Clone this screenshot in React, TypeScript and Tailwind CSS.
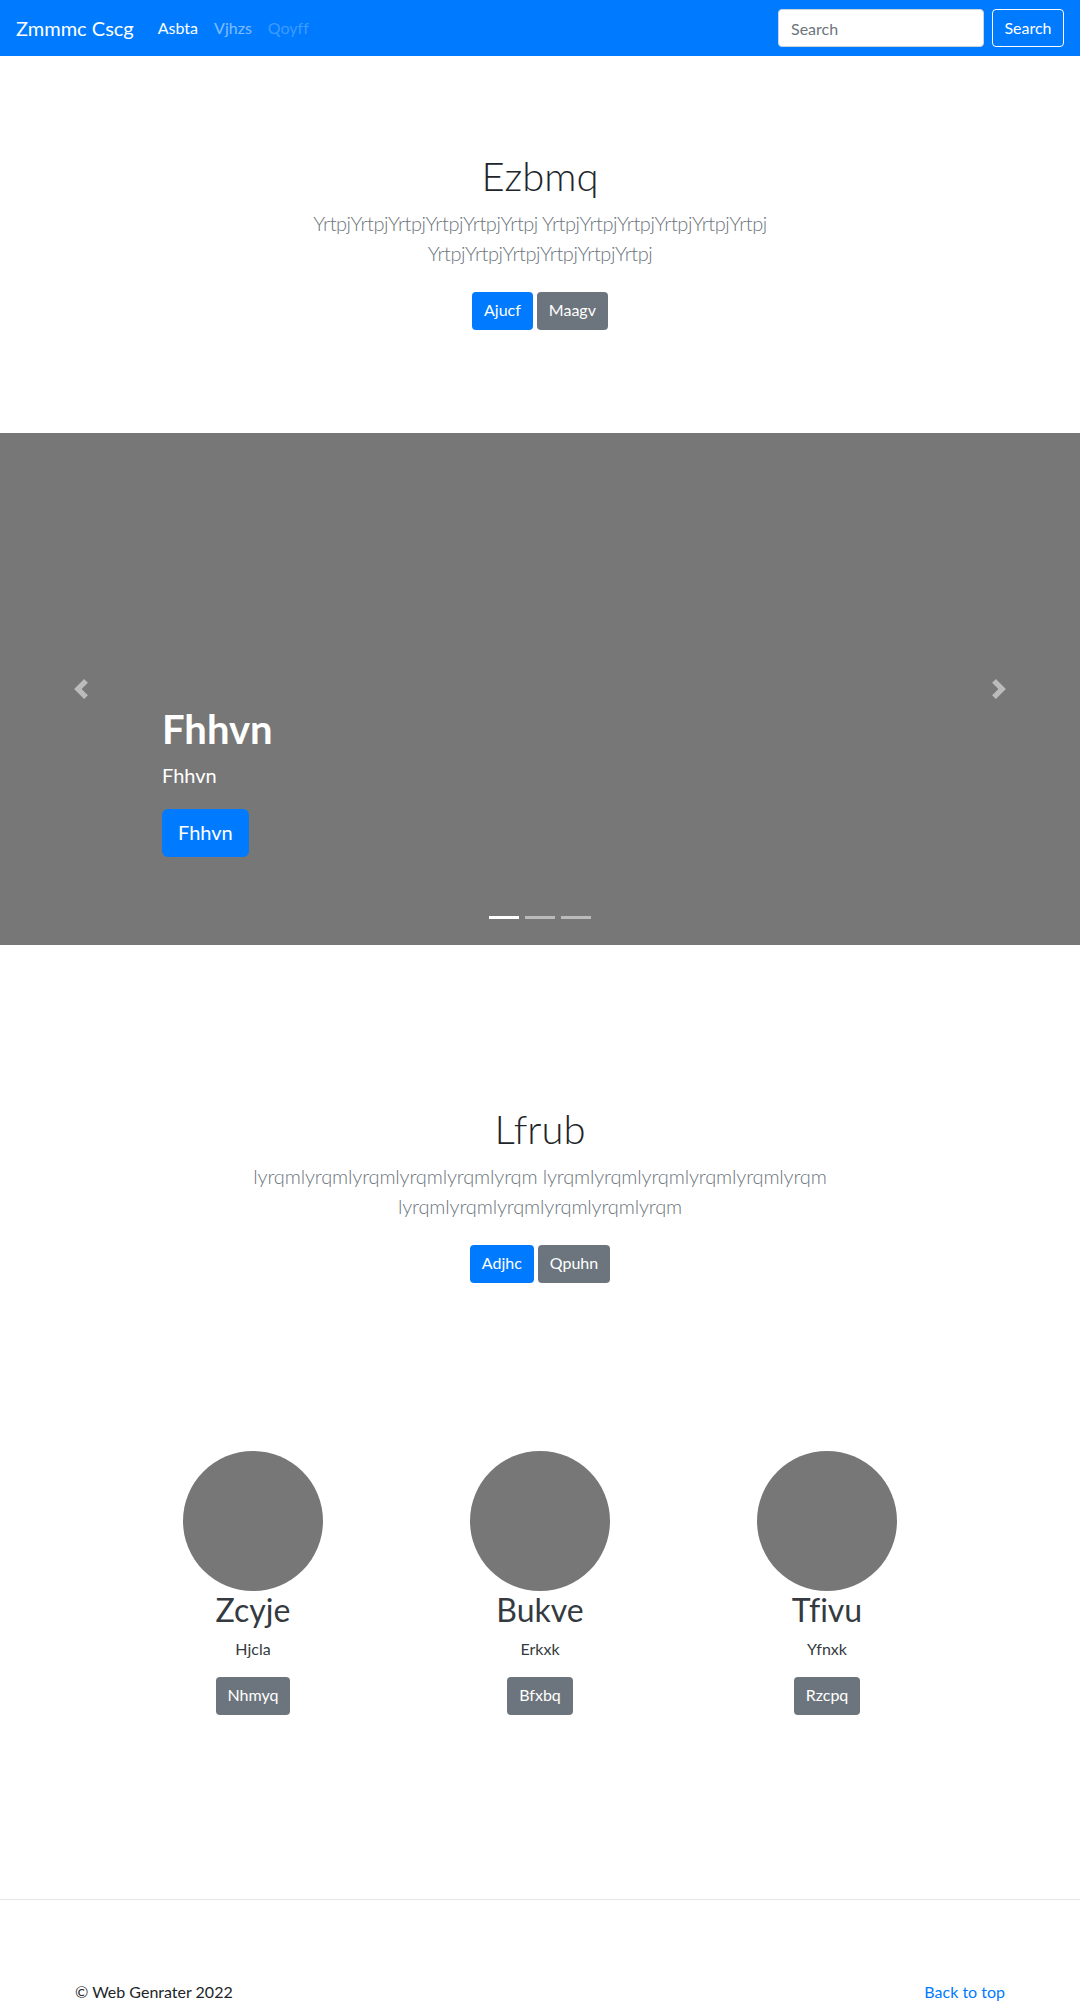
import React from "react";

const navLinks = [
  { label: "Asbta", className: "text-white" },
  { label: "Vjhzs", className: "text-white/50" },
  { label: "Qoyff", className: "text-white/25" },
];

const features = [
  { name: "Zcyje", sub: "Hjcla", btn: "Nhmyq" },
  { name: "Bukve", sub: "Erkxk", btn: "Bfxbq" },
  { name: "Tfivu", sub: "Yfnxk", btn: "Rzcpq" },
];

function Hero({
  title,
  lead,
  primary,
  secondary,
  pad,
  tracking,
}: {
  title: string;
  lead: string;
  primary: string;
  secondary: string;
  pad: string;
  tracking: string;
}) {
  return (
    <section className={`pt-24 text-center ${pad}`}>
      <div className="mx-auto w-[610px]">
        <h1 className="mb-2 text-[40px] font-light leading-[48px]">{title}</h1>
        <p className={`mb-6 text-xl font-light leading-[30px] text-[#6c757d] ${tracking}`}>{lead}</p>
        <div className="flex justify-center gap-1">
          <a className="h-[38px] rounded bg-[#007bff] px-3 py-1.5 text-base leading-6 text-white">{primary}</a>
          <a className="h-[38px] rounded bg-[#6c757d] px-3 py-1.5 text-base leading-6 text-white">{secondary}</a>
        </div>
      </div>
    </section>
  );
}

function Chevron({ dir }: { dir: "prev" | "next" }) {
  return (
    <svg width="20" height="20" viewBox="0 0 8 8" fill="#fff">
      {dir === "prev" ? (
        <path d="M5.25 0l-4 4 4 4 1.5-1.5L4.25 4l2.5-2.5L5.25 0z" />
      ) : (
        <path d="M2.75 0l-1.5 1.5L3.75 4l-2.5 2.5L2.75 8l4-4-4-4z" />
      )}
    </svg>
  );
}

export default function App() {
  return (
    <div className="bg-white font-['Segoe_UI','Lato',sans-serif] text-base leading-6 text-[#212529] [font-variant-ligatures:none]">
      {/* Navbar */}
      <nav className="flex h-14 items-center bg-[#007bff] px-4">
        <a className="mr-4 py-[5px] text-xl leading-[30px] text-white">Zmmmc Cscg</a>
        <ul className="flex">
          {navLinks.map((l) => (
            <li key={l.label}>
              <a className={`block px-2 py-2 ${l.className}`}>{l.label}</a>
            </li>
          ))}
        </ul>
        <form className="ml-auto flex items-center">
          <input
            className="mr-2 h-[38px] w-[206px] rounded border border-[#ced4da] bg-white px-3 py-1.5 text-base text-[#495057] outline-none placeholder:text-[#6c757d]"
            placeholder="Search"
          />
          <button type="button" className="h-[38px] w-[72px] rounded border border-white text-base text-white">
            Search
          </button>
        </form>
      </nav>

      <Hero
        title="Ezbmq"
        lead="YrtpjYrtpjYrtpjYrtpjYrtpjYrtpj YrtpjYrtpjYrtpjYrtpjYrtpjYrtpj YrtpjYrtpjYrtpjYrtpjYrtpjYrtpj"
        primary="Ajucf"
        secondary="Maagv"
        pad="pb-[103px]"
        tracking="tracking-[-0.45px]"
      />

      {/* Carousel */}
      <div className="relative mb-16 h-[512px] overflow-hidden bg-[#777]">
        <div className="absolute top-0 bottom-0 left-0 flex w-[15%] items-center justify-center opacity-50">
          <Chevron dir="prev" />
        </div>
        <div className="absolute top-0 right-0 bottom-0 flex w-[15%] items-center justify-center opacity-50">
          <Chevron dir="next" />
        </div>
        <div className="absolute right-[15%] bottom-12 left-[15%] py-5 text-left text-white">
          <h1 className="mb-2 text-[40px] font-bold leading-[48px]">Fhhvn</h1>
          <p className="mb-5 text-xl leading-7">Fhhvn</p>
          <p className="mb-5">
            <a className="inline-block h-12 rounded-md bg-[#007bff] px-4 py-2 text-xl leading-[30px] text-white">Fhhvn</a>
          </p>
        </div>
        <ol className="absolute right-0 bottom-0 left-0 mb-4 flex justify-center">
          <li className="mx-[3px] my-[10px] h-[3px] w-[30px] bg-white" />
          <li className="mx-[3px] my-[10px] h-[3px] w-[30px] bg-white opacity-50" />
          <li className="mx-[3px] my-[10px] h-[3px] w-[30px] bg-white opacity-50" />
        </ol>
      </div>

      <Hero
        title="Lfrub"
        lead="lyrqmlyrqmlyrqmlyrqmlyrqmlyrqm lyrqmlyrqmlyrqmlyrqmlyrqmlyrqm lyrqmlyrqmlyrqmlyrqmlyrqmlyrqm"
        primary="Adjhc"
        secondary="Qpuhn"
        pad="pb-[168px]"
        tracking="tracking-[-0.15px]"
      />

      {/* Features */}
      <div className="mx-auto grid w-[861px] grid-cols-3">
        {features.map((f) => (
          <div key={f.name} className="flex flex-col items-center text-center">
            <div className="h-[140px] w-[140px] rounded-full bg-[#777]" />
            <h2 className="mb-2 text-[32px] font-normal leading-[38px] text-[#343a40]">{f.name}</h2>
            <p className="mb-4 text-[#343a40]">{f.sub}</p>
            <a className="h-[38px] rounded bg-[#6c757d] px-3 py-1.5 leading-6 text-white">{f.btn}</a>
          </div>
        ))}
      </div>

      <hr className="mt-[184px] border-t border-black/10" />

      <footer className="mx-auto flex w-[930px] justify-between pt-20">
        <p>© Web Genrater 2022</p>
        <a className="text-[#007bff]">Back to top</a>
      </footer>
    </div>
  );
}
